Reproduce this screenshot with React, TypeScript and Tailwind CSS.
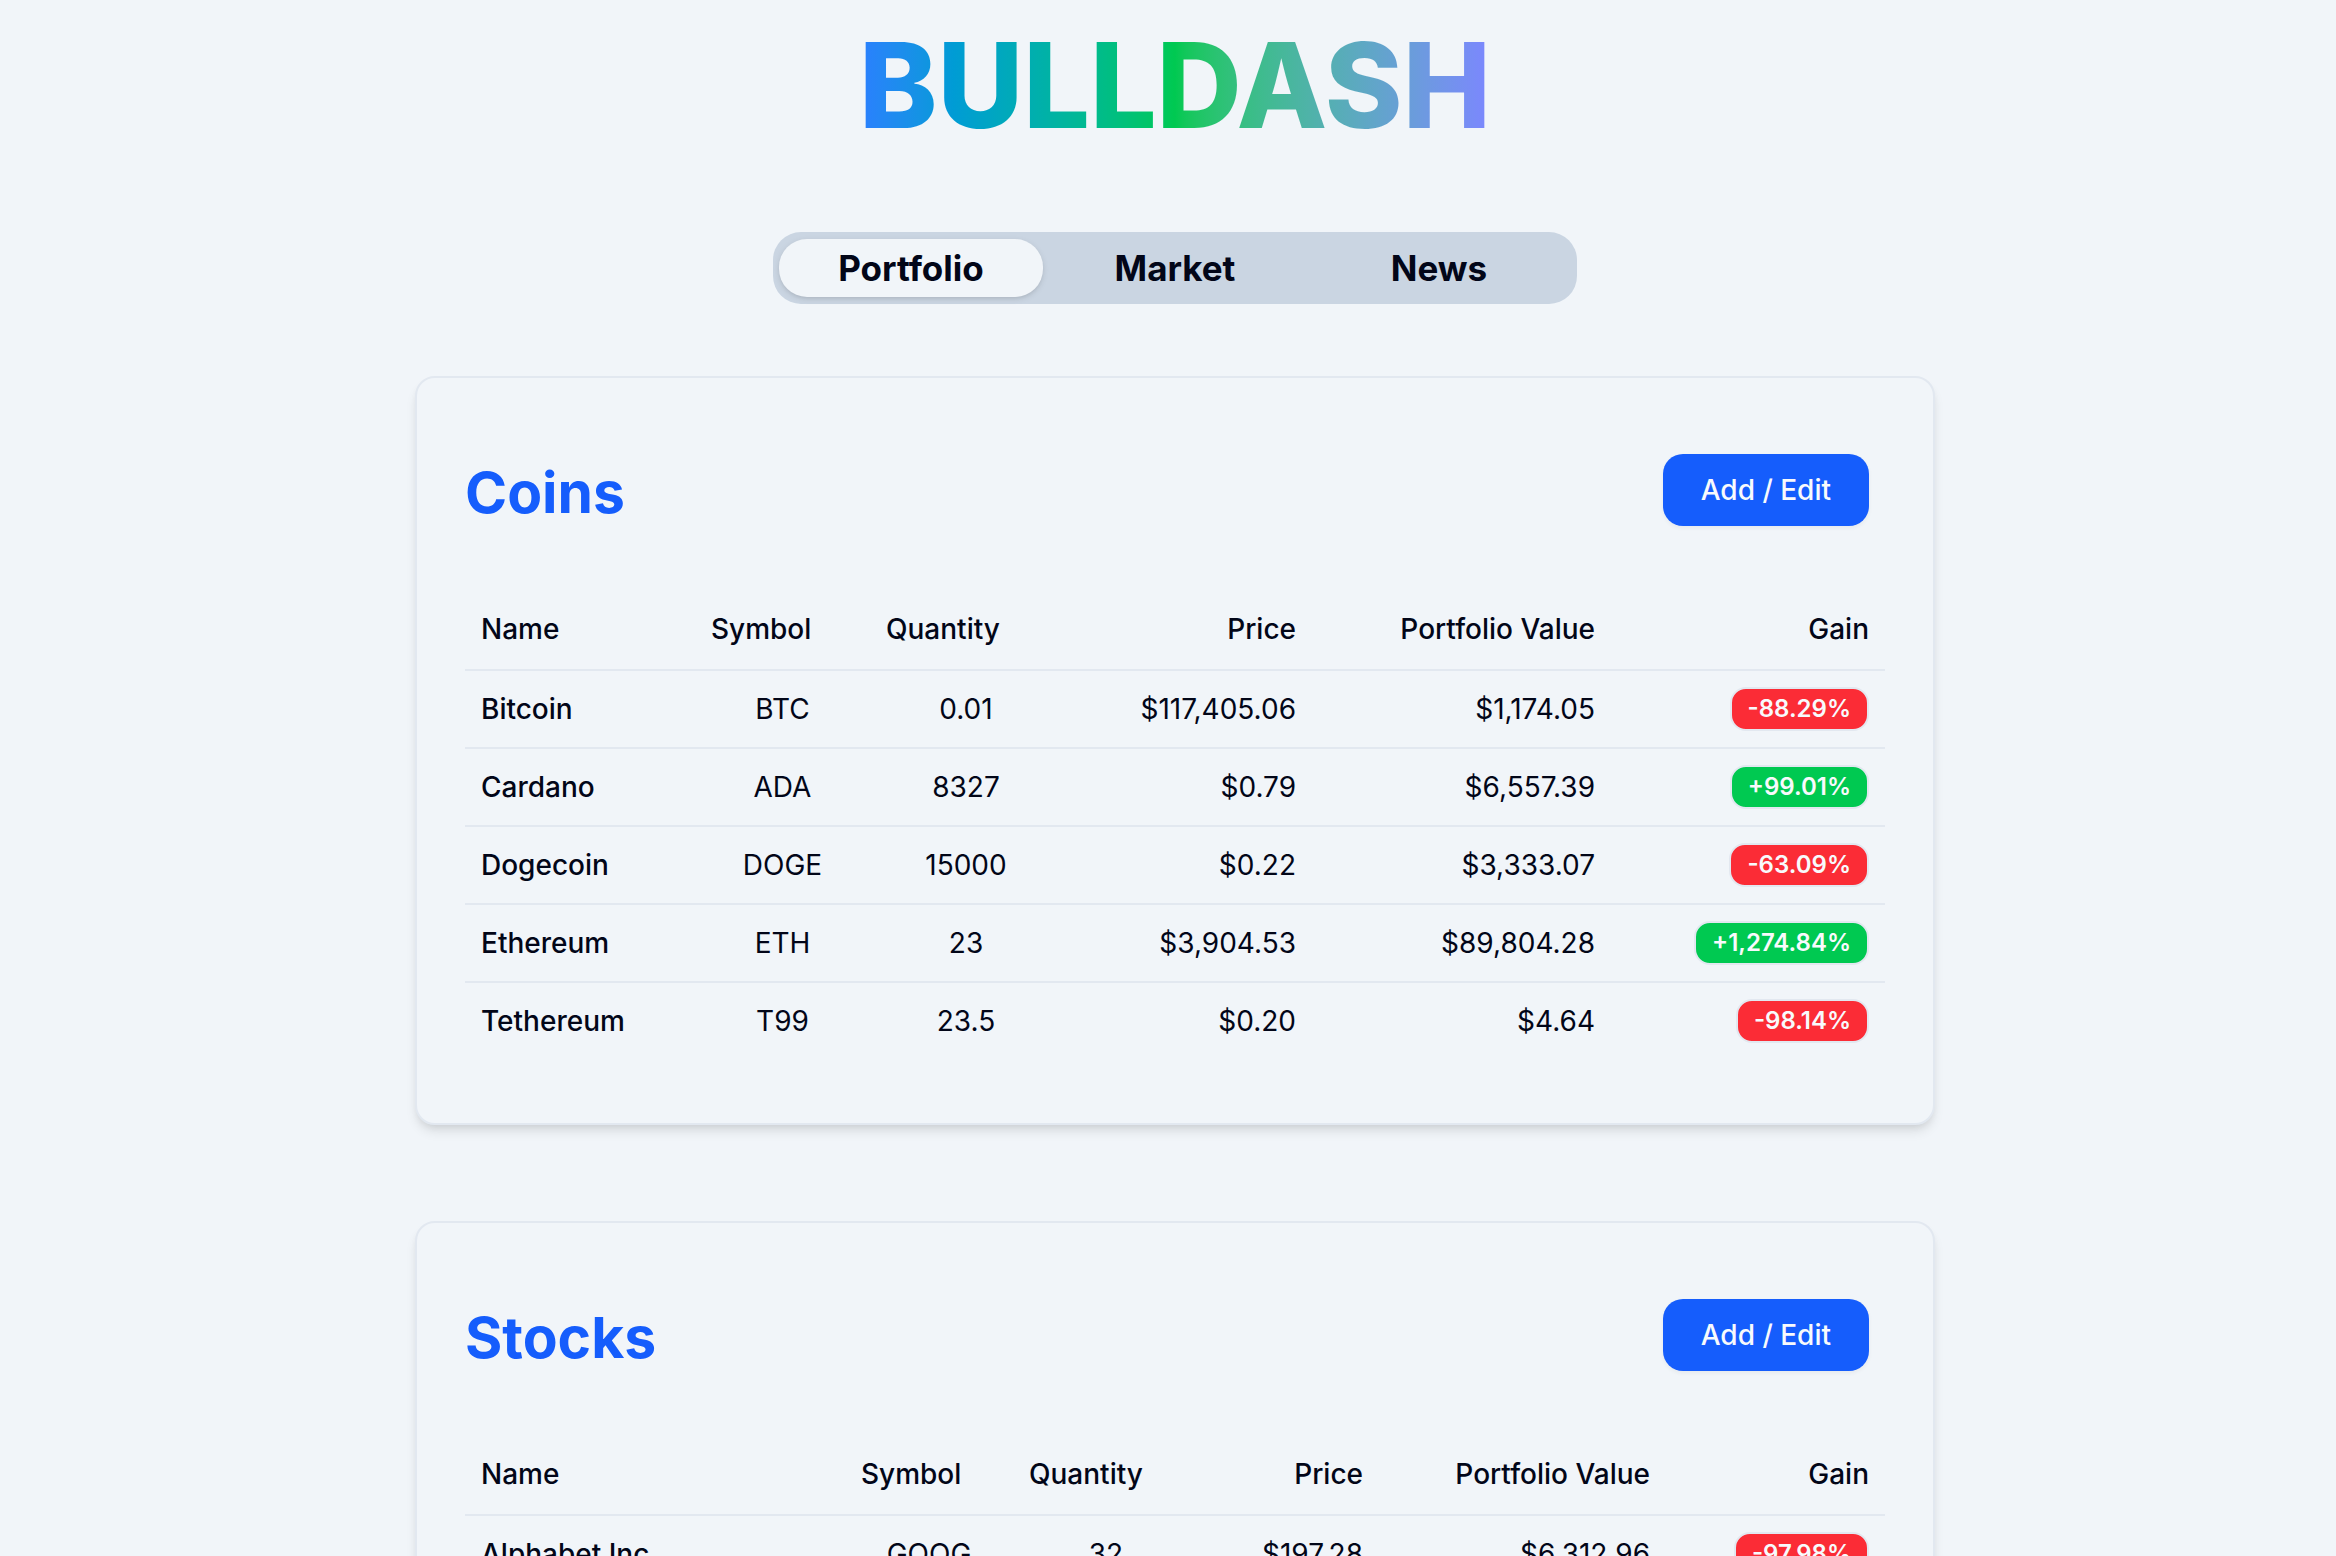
import React, { useState } from "react";

type Holding = {
  name: string;
  symbol: string;
  quantity: string;
  price: string;
  value: string;
  gain: string;
};

const coins: Holding[] = [
  { name: "Bitcoin", symbol: "BTC", quantity: "0.01", price: "$117,405.06", value: "$1,174.05", gain: "-88.29%" },
  { name: "Cardano", symbol: "ADA", quantity: "8327", price: "$0.79", value: "$6,557.39", gain: "+99.01%" },
  { name: "Dogecoin", symbol: "DOGE", quantity: "15000", price: "$0.22", value: "$3,333.07", gain: "-63.09%" },
  { name: "Ethereum", symbol: "ETH", quantity: "23", price: "$3,904.53", value: "$89,804.28", gain: "+1,274.84%" },
  { name: "Tethereum", symbol: "T99", quantity: "23.5", price: "$0.20", value: "$4.64", gain: "-98.14%" },
];

const stocks: Holding[] = [
  { name: "Alphabet Inc.", symbol: "GOOG", quantity: "32", price: "$197.28", value: "$6,312.96", gain: "-97.98%" },
];

const coinColumns = ["w-[230px]", "w-[175px]", "w-[192px]", "w-[250px]", "w-[299px]", "w-[274px]"];
const stockColumns = ["w-[380px]", "w-[168px]", "w-[186px]", "w-[180px]", "w-[287px]", "w-[219px]"];

const tabs = ["Portfolio", "Market", "News"];

function GainBadge({ gain }: { gain: string }) {
  const color = gain.startsWith("-") ? "bg-[#fb2c36]" : "bg-[#00c951]";
  return (
    <span
      className={`inline-flex h-11 items-center rounded-2xl border-2 border-[#e2e8f0] px-4 text-2xl font-semibold text-[#f8fafc] ${color}`}
    >
      {gain}
    </span>
  );
}

function HoldingsCard({ title, rows, columns }: { title: string; rows: Holding[]; columns: string[] }) {
  return (
    <section
      aria-label={title}
      className="rounded-[20px] border-2 border-[#e2e8f0] bg-[#f1f5f9] px-12 pt-19 pb-16 shadow-[0_8px_12px_-2px_rgba(0,0,0,0.1),0_4px_8px_-4px_rgba(0,0,0,0.1)]"
    >
      <div className="flex items-end justify-between">
        <h2 className="text-[57px] leading-[66px] font-bold text-[#155dfc]">{title}</h2>
        <button
          type="button"
          className="mr-4 h-18 rounded-[20px] bg-[#155dfc] px-[38px] text-[28px] font-medium text-[#f8fafc] shadow-[0_2px_4px_rgba(0,0,0,0.05)]"
        >
          Add / Edit
        </button>
      </div>
      <table className="mt-[63px] w-full table-fixed border-separate border-spacing-0 text-[28px] leading-10 whitespace-nowrap [&_td]:h-19 [&_td]:border-[#e2e8f0] [&_td]:px-4 [&_td]:py-0 [&_th]:h-[82px] [&_th]:border-b-2 [&_th]:border-[#e2e8f0] [&_th]:px-4 [&_th]:font-medium [&_tbody_tr:not(:last-child)_td]:h-[78px] [&_tbody_tr:not(:last-child)_td]:border-b-2">
        <colgroup>
          {columns.map((width, i) => (
            <col key={i} className={width} />
          ))}
        </colgroup>
        <thead>
          <tr>
            <th scope="col" className="text-left">Name</th>
            <th scope="col" className="text-left">Symbol</th>
            <th scope="col" className="text-left">Quantity</th>
            <th scope="col" className="text-right">Price</th>
            <th scope="col" className="text-right">Portfolio Value</th>
            <th scope="col" className="text-right">Gain</th>
          </tr>
        </thead>
        <tbody>
          {rows.map((row) => (
            <tr key={row.symbol}>
              <td className="font-medium">{row.name}</td>
              <td className="text-center">{row.symbol}</td>
              <td className="text-center">{row.quantity}</td>
              <td className="text-right">{row.price}</td>
              <td className="text-right">{row.value}</td>
              <td>
                <div className="flex justify-end">
                  <GainBadge gain={row.gain} />
                </div>
              </td>
            </tr>
          ))}
        </tbody>
      </table>
    </section>
  );
}

export default function App() {
  const [active, setActive] = useState("Portfolio");
  return (
    <main className="flex min-h-screen flex-col items-center bg-[#f1f5f9] pt-6 pb-24 pl-3.5 font-['Inter',sans-serif] text-[#020618]">
      <h1 className="bg-linear-to-r from-[#2b7fff] via-[#00c951] to-[#7c86ff] bg-clip-text text-[118px] leading-[122px] font-extrabold text-transparent">
        BULLDASH
      </h1>
      <div role="tablist" className="mt-[86px] flex h-18 w-full max-w-[804px] items-center rounded-[28px] bg-[#cad5e2] px-1.5">
        {tabs.map((tab) => (
          <button
            key={tab}
            type="button"
            role="tab"
            aria-selected={tab === active}
            onClick={() => setActive(tab)}
            className={
              tab === active
                ? "h-[58px] flex-1 rounded-[28px] bg-[#f1f5f9] text-[35px] leading-10 font-bold shadow-[0_2px_6px_rgba(0,0,0,0.1),0_2px_4px_-2px_rgba(0,0,0,0.1)]"
                : "h-[58px] flex-1 rounded-[28px] text-[35px] leading-10 font-bold"
            }
          >
            {tab}
          </button>
        ))}
      </div>
      <div className="mt-18 flex w-full max-w-[1520px] flex-col gap-24">
        <HoldingsCard title="Coins" rows={coins} columns={coinColumns} />
        <HoldingsCard title="Stocks" rows={stocks} columns={stockColumns} />
      </div>
    </main>
  );
}
